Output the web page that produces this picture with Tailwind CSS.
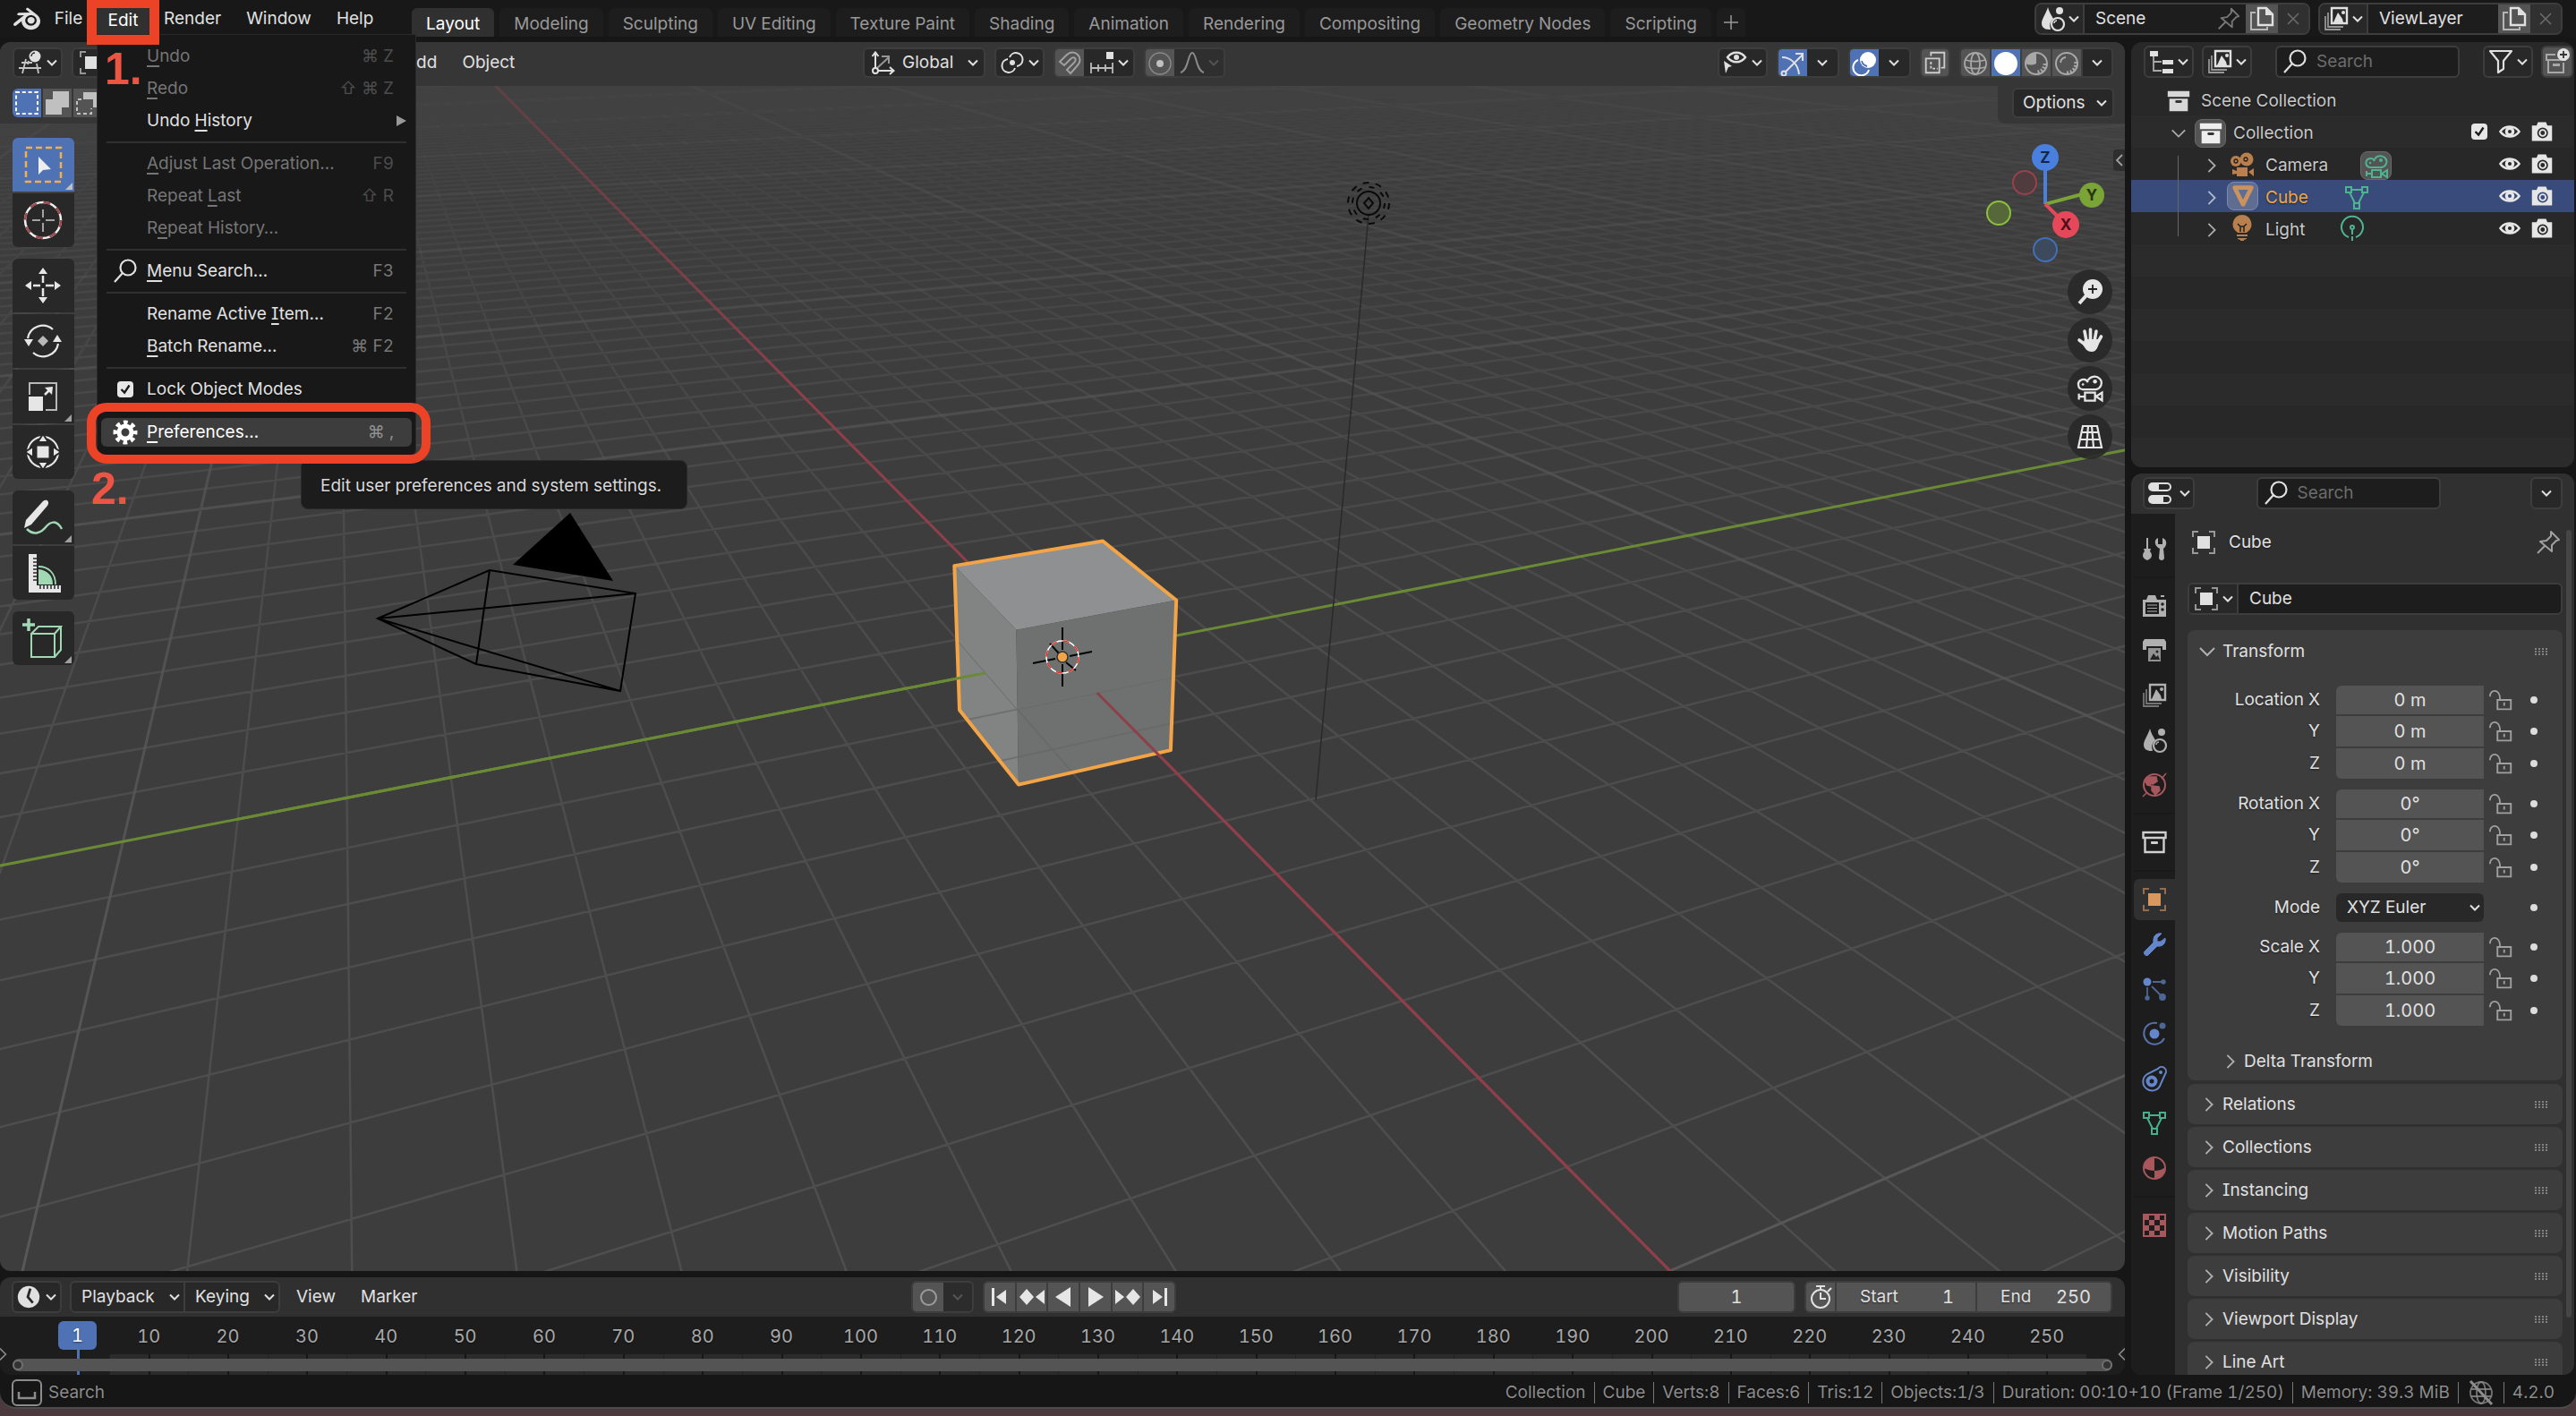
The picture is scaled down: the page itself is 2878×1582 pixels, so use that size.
<!DOCTYPE html>
<html lang="en">
<head>
<meta charset="utf-8">
<title>Blender</title>
<script src="https://cdn.jsdelivr.net/npm/@tailwindcss/browser@4"></script>
</head>
<body class="h-screen overflow-hidden bg-[#4a3a3e] font-['Inter',sans-serif] text-[19px] leading-6 text-[#e0e0e0] [font-feature-settings:'cv08','tnum'] text-shadow-[0_1px_2px_#00000080]">

<svg class="hidden" aria-hidden="true">
  <symbol id="logo" viewBox="0 0 24 24"><path fill="currentColor" d="M12.51 13.214c.046-.8.438-1.506 1.03-2.006a3.424 3.424 0 0 1 2.212-.79c.85 0 1.631.3 2.211.79.592.5.983 1.206 1.028 2.005.045.823-.285 1.586-.865 2.153a3.389 3.389 0 0 1-2.374.938 3.393 3.393 0 0 1-2.376-.938c-.58-.567-.91-1.33-.865-2.152M7.35 14.831c.006.314.106.922.256 1.398a7.372 7.372 0 0 0 1.593 2.757 8.227 8.227 0 0 0 2.787 2.001 8.947 8.947 0 0 0 3.66.76 8.964 8.964 0 0 0 3.657-.772 8.285 8.285 0 0 0 2.785-2.01 7.428 7.428 0 0 0 1.592-2.762 6.964 6.964 0 0 0 .25-3.074 7.123 7.123 0 0 0-1.016-2.779 7.764 7.764 0 0 0-1.852-2.043h.002L13.566 2.55l-.02-.015c-.492-.378-1.319-.376-1.86.002-.547.382-.609 1.015-.123 1.415l-.001.001 3.126 2.543-9.53.01h-.013c-.788.001-1.545.518-1.695 1.172-.154.665.38 1.217 1.2 1.22V8.9l4.83-.01-8.62 6.617-.034.025c-.813.622-1.075 1.658-.563 2.313.52.667 1.625.668 2.447.004L7.414 14s-.069.52-.063.831zm12.09 1.741c-.97.988-2.326 1.548-3.795 1.55-1.47.004-2.827-.552-3.797-1.538a4.51 4.51 0 0 1-1.036-1.622 4.282 4.282 0 0 1 .282-3.519 4.702 4.702 0 0 1 1.153-1.371c.942-.768 2.141-1.183 3.396-1.185 1.256-.002 2.455.41 3.398 1.175.48.391.87.854 1.152 1.367a4.28 4.28 0 0 1 .522 1.706 4.236 4.236 0 0 1-.239 1.811 4.54 4.54 0 0 1-1.035 1.626"/></symbol>
  <symbol id="down" viewBox="0 0 16 16"><path d="M3 5.5l5 5 5-5" fill="none" stroke="currentColor" stroke-width="2"/></symbol>
  <symbol id="chev-d" viewBox="0 0 20 20"><path d="M2 6l8 8 8-8" fill="none" stroke="currentColor" stroke-width="2"/></symbol>
  <symbol id="chev-r" viewBox="0 0 20 20"><path d="M6 2l8 8-8 8" fill="none" stroke="currentColor" stroke-width="2"/></symbol>
  <symbol id="search" viewBox="0 0 32 32"><g fill="none" stroke="currentColor" stroke-width="2.2"><circle cx="19" cy="12" r="8.5"/><path d="M13 18L4 28"/></g></symbol>
  <symbol id="gear" viewBox="0 0 32 32"><g fill="none" stroke="currentColor"><circle cx="16" cy="16" r="7" stroke-width="5"/><circle cx="16" cy="16" r="11" stroke-width="5" stroke-dasharray="4.6 4.04" stroke-dashoffset="2.3"/></g></symbol>
  <symbol id="close" viewBox="0 0 16 16"><path d="M2 2l12 12M14 2L2 14" stroke="currentColor" stroke-width="1.5"/></symbol>
  <symbol id="v3d" viewBox="0 0 32 32"><g fill="none" stroke="currentColor" stroke-width="1.8"><path d="M11 12L7 28M23 17l2 11M3 22h25M6 16h12M14 14l-1 4" opacity=".85"/></g><circle cx="21" cy="9" r="6.5" fill="currentColor"/><path d="M17 9a4 4 0 0 1 4-4" fill="none" stroke="#282828" stroke-width="1.500"/></symbol>
  <symbol id="object" viewBox="0 0 32 32"><rect x="9" y="9" width="14" height="14" fill="currentColor"/><path d="M4 10V4h6M22 4h6v6M28 22v6h-6M10 28H4v-6" fill="none" stroke="currentColor" stroke-width="2" opacity=".6"/></symbol>
  <symbol id="axes" viewBox="0 0 32 32"><g fill="none" stroke="currentColor" stroke-width="2"><circle cx="8" cy="25" r="3"/><path d="M8 22V5M4.500 9L8 4.500 11.500 9M11 25h17M24 21l4.500 4-4.500 4"/><path d="M10 22L23 10M15 9h8v8" opacity=".6"/></g></symbol>
  <symbol id="pivot" viewBox="0 0 32 32"><g fill="none" stroke="currentColor" stroke-width="2"><path d="M13 10a7.500 7.500 0 1 1 8 10"/><path d="M19 22A7.500 7.500 0 1 1 11 12"/></g><circle cx="16" cy="16" r="3" fill="currentColor"/></symbol>
  <symbol id="magnet" viewBox="0 0 32 32"><path d="M5 14l7-7c5-5 10-4 13-1s4 8-1 13l-7 8-4-4 8-8c2-2 2-4 1-5s-3-1-5 1l-7 7z" fill="none" stroke="currentColor" stroke-width="2"/></symbol>
  <symbol id="snapinc" viewBox="0 0 32 32"><path d="M4 16v12M12 18v8M20 18v8M28 16v12M4 22h24" stroke="currentColor" stroke-width="1.8" opacity=".8"/><rect x="21" y="4" width="8" height="8" fill="currentColor"/></symbol>
  <symbol id="prop" viewBox="0 0 32 32"><circle cx="16" cy="16" r="12" fill="none" stroke="currentColor" stroke-width="1.500" opacity=".5"/><circle cx="16" cy="16" r="4" fill="currentColor"/></symbol>
  <symbol id="falloff" viewBox="0 0 32 32"><path d="M3 27c9-2 8-22 13-22s4 20 13 22" fill="none" stroke="currentColor" stroke-width="2"/></symbol>
  <symbol id="viseye" viewBox="0 0 32 32"><path d="M3 14l9 6-4 1-3 7z" fill="currentColor"/><path d="M7 10c5-7 15-7 20 0-5 7-15 7-20 0z" fill="none" stroke="currentColor" stroke-width="2.400"/><circle cx="17" cy="10" r="3" fill="currentColor"/></symbol>
  <symbol id="gizmo" viewBox="0 0 32 32"><g fill="none" stroke="currentColor" stroke-width="2"><circle cx="6" cy="27" r="2.500"/><path d="M8 25L27 6M19 5h8v8M4 9c10 0 18 8 19 19"/></g></symbol>
  <symbol id="overlay" viewBox="0 0 32 32"><circle cx="20" cy="12" r="9" fill="currentColor"/><path d="M9 12a9 9 0 1 0 12 11" fill="none" stroke="currentColor" stroke-width="2"/><path d="M13 13a8 8 0 0 0 6 6" fill="none" stroke="#4f72b4" stroke-width="1.800"/></symbol>
  <symbol id="xray" viewBox="0 0 32 32"><g fill="none" stroke="currentColor" stroke-width="2"><path d="M5 11h16v17H5zM11 8V4h16v18h-4"/><path d="M11 15v8h8" stroke-dasharray="3 2"/></g></symbol>
  <symbol id="wire" viewBox="0 0 32 32"><g fill="none" stroke="currentColor" stroke-width="1.800"><circle cx="16" cy="16" r="12"/><ellipse cx="16" cy="16" rx="5" ry="12"/><path d="M5 12c7 2 15 2 22 0M5 20c7 2 15 2 22 0"/></g></symbol>
  <symbol id="solid" viewBox="0 0 32 32"><circle cx="16" cy="16" r="13" fill="currentColor"/></symbol>
  <symbol id="matprev" viewBox="0 0 32 32"><circle cx="16" cy="16" r="12" fill="none" stroke="currentColor" stroke-width="2"/><path d="M16 4v12c-4 2-8 2-12 0A12 12 0 0 1 16 4z" fill="currentColor"/><path d="M26 16a10 10 0 0 1-9 10" fill="none" stroke="currentColor" stroke-width="5" stroke-dasharray="2 2"/></symbol>
  <symbol id="rendered" viewBox="0 0 32 32"><g fill="none" stroke="currentColor" stroke-width="2"><circle cx="16" cy="16" r="12"/><path d="M9 15a7 7 0 0 1 6-6"/><path d="M26 14a10 10 0 0 1-12 12" stroke-width="4" stroke-dasharray="2 2"/></g></symbol>
  <symbol id="scene" viewBox="0 0 32 32"><path d="M11 3C9 10 4 16 4 21s4 7 8 7c1 0 2 0 2-1-2-4 0-9 3-11-2-4-5-8-6-13z" fill="currentColor"/><circle cx="24" cy="7" r="4" fill="currentColor"/><circle cx="22" cy="22" r="7" fill="none" stroke="currentColor" stroke-width="2.200"/><path d="M18 21c0-2 2-3 3-3" fill="none" stroke="currentColor" stroke-width="1.500"/></symbol>
  <symbol id="layers" viewBox="0 0 32 32"><path d="M11 4h17v17H11z" fill="none" stroke="currentColor" stroke-width="2.400"/><path d="M13 20l5-11 5 7 1 4z" fill="currentColor"/><circle cx="24" cy="9" r="2" fill="currentColor"/><path d="M7 9v16h17M4 13v15h17" fill="none" stroke="currentColor" stroke-width="1.800" opacity=".6"/></symbol>
  <symbol id="copy" viewBox="0 0 32 32"><path d="M12 4h9l7 7v12H12z" fill="none" stroke="currentColor" stroke-width="2.400"/><path d="M20 4v8h8" fill="currentColor"/><path d="M9 9H4v19h18v-3" fill="none" stroke="currentColor" stroke-width="2" opacity=".7"/></symbol>
  <symbol id="pin" viewBox="0 0 32 32"><path d="M4 28l8-8M19 4l9 9-3 1-5 5 0 7L7 15l7-1 5-5z" fill="none" stroke="currentColor" stroke-width="2" stroke-linejoin="round"/></symbol>
  <symbol id="outliner" viewBox="0 0 32 32"><path d="M3 4h9v6H3zM17 14h12v5H17zM17 24h12v5H17z" fill="currentColor"/><path d="M7 10v16h9M7 16h9" fill="none" stroke="currentColor" stroke-width="1.800" opacity=".7"/></symbol>
  <symbol id="filter" viewBox="0 0 32 32"><path d="M4 4h24l-9 11v9l-6 4V15z" fill="none" stroke="currentColor" stroke-width="2.200" stroke-linejoin="round"/></symbol>
  <symbol id="newcol" viewBox="0 0 32 32"><g fill="none" stroke="currentColor" stroke-width="2" opacity=".6"><path d="M14 8H4v6h22M6 15v13h17V17"/></g><path d="M11 18h8v3h-8z" fill="currentColor" opacity=".6"/><circle cx="23" cy="8" r="7" fill="currentColor"/><path d="M23 4v8M19 8h8" stroke="#333" stroke-width="1.800"/></symbol>
  <symbol id="box" viewBox="0 0 32 32"><path d="M3 4h26v7H3zM5 13h22v15H5z" fill="currentColor"/><rect x="12" y="15" width="8" height="3" rx="1.500" fill="#333"/></symbol>
  <symbol id="boxline" viewBox="0 0 32 32"><path d="M3.500 5h25v6h-25zM5.500 11v16h21V11" fill="none" stroke="currentColor" stroke-width="2.400"/><rect x="12" y="15" width="8" height="3" rx="1" fill="currentColor"/></symbol>
  <symbol id="moviecam" viewBox="0 0 32 32"><circle cx="9" cy="11" r="6" fill="currentColor"/><circle cx="21" cy="9" r="7.500" fill="currentColor"/><path d="M10 18h12v10H10zM23 23l6-4v9zM5 20l5 2v3l-5 1z" fill="currentColor"/><circle cx="9" cy="11" r="2" fill="none" stroke="#222" stroke-width="1.300"/><circle cx="20" cy="9" r="2" fill="none" stroke="#222" stroke-width="1.300"/></symbol>
  <symbol id="camline" viewBox="0 0 32 32"><g fill="none" stroke="currentColor" stroke-width="2"><path d="M14 8a7 6.500 0 1 1 8 9H9a5 5 0 1 1 5-7"/><path d="M11 20h10v8H11zM22 24l6-4v8zM11 24H6M5 21v6"/></g><circle cx="21" cy="9" r="2" fill="currentColor"/><circle cx="9" cy="12" r="1.200" fill="currentColor"/></symbol>
  <symbol id="meshobj" viewBox="0 0 32 32"><path d="M6 6h20L16 26z" fill="none" stroke="currentColor" stroke-width="5" stroke-linejoin="round"/></symbol>
  <symbol id="mesh" viewBox="0 0 32 32"><g fill="none" stroke="currentColor" stroke-width="2"><path d="M4 4h6v6H4zM22 4h6v6h-6zM13 22h6v6h-6zM10 7h12M8 10l6 12M24 10l-6 12"/></g></symbol>
  <symbol id="bulb" viewBox="0 0 32 32"><path d="M16 1a10.500 10.500 0 0 1 6 19l-1 1H11l-1-1a10.500 10.500 0 0 1 6-19zM10 23h12v2H10zM11 27h10v1l-3 1v1h-4v-1l-3-1z" fill="currentColor"/><path d="M11 11l3 3h4l3-3M14 14v6M18 14v6" fill="none" stroke="#222" stroke-width="1.500"/></symbol>
  <symbol id="lightdata" viewBox="0 0 32 32"><g fill="none" stroke="currentColor" stroke-width="2"><path d="M12 26A12 12 0 1 1 20 26"/><circle cx="16" cy="15" r="2"/><path d="M16 18v12" stroke-dasharray="5 2"/></g></symbol>
  <symbol id="eye" viewBox="0 0 32 32"><path d="M3 16c6-9 20-9 26 0-6 9-20 9-26 0z" fill="none" stroke="currentColor" stroke-width="3"/><circle cx="16" cy="16" r="4.500" fill="none" stroke="currentColor" stroke-width="4"/></symbol>
  <symbol id="photocam" viewBox="0 0 32 32"><path fill-rule="evenodd" d="M1 7h7l2-5h12l2 5h7v23H1zM17 10a8 8 0 1 0 0 16 8 8 0 0 0 0-16z" fill="currentColor"/><circle cx="17" cy="18" r="4.500" fill="none" stroke="currentColor" stroke-width="2.500"/></symbol>
  <symbol id="propsicon" viewBox="0 0 32 32"><rect x="3" y="4" width="26" height="10" rx="5" fill="currentColor"/><rect x="3" y="18" width="26" height="10" rx="5" fill="currentColor"/><path d="M15 6h9a3 3 0 0 1 0 6h-9zM20 20h4a3 3 0 0 1 0 6h-4z" fill="#282828"/></symbol>
  <symbol id="tools" viewBox="0 0 32 32"><path d="M7 4h2v12h3l-1 3c3 3 3 8-3 10-6-2-6-7-3-10l-1-3h3zM20 4v7h5V4c6 2 5 9 1 12l1 10c0 4-6 4-6 0l1-10c-6-3-7-10-2-12z" fill="currentColor"/></symbol>
  <symbol id="rendercam" viewBox="0 0 32 32"><path fill-rule="evenodd" d="M3 9h4l2-5h8l2 5h10v19H3zM6 12v13h15V12z" fill="currentColor"/><path d="M8 15h11M8 18.500h11M8 22h11" stroke="currentColor" stroke-width="1.200"/><path d="M23 4h4v2h-4z" fill="currentColor"/><circle cx="25" cy="14" r="1.800" fill="#222"/><circle cx="25" cy="20" r="1.800" fill="#222"/></symbol>
  <symbol id="printer" viewBox="0 0 32 32"><path d="M5 3h22l2 3v9H25v-4H7v4H3V6z" fill="currentColor"/><path d="M9 13h14v15H9z" fill="currentColor" opacity=".8"/><path d="M11 26l4-7 3 4 2-2 2 5z" fill="#222"/><circle cx="19" cy="17" r="1.500" fill="#222"/></symbol>
  <symbol id="world" viewBox="0 0 32 32"><circle cx="16" cy="16" r="12" fill="none" stroke="currentColor" stroke-width="2"/><path d="M9 7l9 0 1 5-5 3-3-2 1 4-4-1-3-5zM13 17l8 1 1 4-5 5-4-5zM24 9l5-6M3 29l5-5" fill="currentColor" stroke="currentColor" stroke-width="1.500"/></symbol>
  <symbol id="wrench" viewBox="0 0 32 32"><path d="M28 9c1 6-3 10-9 9L9 28c-3 2-6-2-4-4l10-10C14 7 18 3 24 4l-5 5 0 4h4z" fill="currentColor" stroke="currentColor" stroke-linejoin="round"/></symbol>
  <symbol id="particles" viewBox="0 0 32 32"><circle cx="8" cy="8" r="4.500" fill="currentColor"/><g opacity=".7" fill="currentColor" stroke="currentColor" stroke-width="1.800"><circle cx="26" cy="8" r="1.800"/><circle cx="8" cy="26" r="1.800"/><circle cx="25" cy="25" r="3"/><path d="M14 8h11M8 14v11M13 13l11 11"/></g></symbol>
  <symbol id="physics" viewBox="0 0 32 32"><circle cx="16" cy="16" r="5.500" fill="currentColor"/><circle cx="25" cy="7" r="3.500" fill="currentColor" opacity=".7"/><path d="M19 4a12 12 0 1 0 8 17" fill="none" stroke="currentColor" stroke-width="2" opacity=".8"/></symbol>
  <symbol id="constraint" viewBox="0 0 32 32"><g fill="none" stroke="currentColor" stroke-width="2"><path d="M20 5a5 5 0 0 1 8 6l-5 11A10 10 0 1 1 8 11z"/><circle cx="13" cy="19" r="4.500" stroke-width="4"/></g><circle cx="23" cy="9" r="2" fill="currentColor"/></symbol>
  <symbol id="material" viewBox="0 0 32 32"><circle cx="16" cy="16" r="12" fill="none" stroke="currentColor" stroke-width="2"/><path d="M16 4v15c-4 0-8-1-12-3A12 12 0 0 1 16 4zM16 19v9c7 0 12-6 12-13-4 3-8 4-12 4z" fill="currentColor"/></symbol>
  <symbol id="texture" viewBox="0 0 32 32"><path d="M4 4h24v24H4z" fill="none" stroke="currentColor" stroke-width="2"/><path d="M4 4h6v6H4zM16 4h6v6h-6zM10 10h6v6h-6zM22 10h6v6h-6zM4 16h6v6H4zM16 16h6v6h-6zM10 22h6v6h-6zM22 22h6v6h-6z" fill="currentColor"/></symbol>
  <symbol id="lock" viewBox="0 0 32 32"><g fill="none" stroke="currentColor" stroke-width="2"><path d="M12 16h16v11H12zM3 12c0-9 12-10 12 3"/><path d="M20 19v4"/></g></symbol>
  <symbol id="dots" viewBox="0 0 16 8"><path d="M1 1h14M1 4h14M1 7h14" stroke="currentColor" stroke-width="1.500" stroke-dasharray="2 2"/></symbol>
  <symbol id="clock" viewBox="0 0 32 32"><circle cx="16" cy="16" r="13" fill="currentColor"/><path d="M18 6l-3 10 6 7" fill="none" stroke="#282828" stroke-width="3"/></symbol>
  <symbol id="stopwatch" viewBox="0 0 32 32"><g fill="none" stroke="currentColor" stroke-width="2"><circle cx="16" cy="18" r="10"/><path d="M16 11v7h6M11 4h10M16 4v4M24 10l4-4"/></g></symbol>
  <symbol id="globe" viewBox="0 0 32 32"><g fill="none" stroke="currentColor" stroke-width="1.800"><circle cx="16" cy="16" r="12" opacity=".8"/><ellipse cx="16" cy="16" rx="5" ry="12" opacity=".8"/><path d="M5 12h22M5 20h22" opacity=".8"/><path d="M4 3l24 26" stroke-width="3"/></g></symbol>
  <symbol id="check" viewBox="0 0 20 20"><path d="M5 10l4 4 6-9" fill="none" stroke="#181818" stroke-width="2.600"/></symbol>
</svg>

<div class="flex h-full flex-col">
<div class="flex min-h-0 flex-1 flex-col overflow-hidden rounded-b-[18px] border-b-2 border-[#4c4c4c] bg-[#161616]">

  <!-- Top bar -->
  <header class="relative flex h-[41px] shrink-0 items-end bg-[#181818] pr-[15px]">
    <nav class="flex h-[41px] w-[460px] shrink-0 items-center pl-[15px]">
      <button class="mr-[15px]" aria-label="Blender"><svg class="size-[30px]"><use href="#logo"/></svg></button>
      <button class="mr-[15px] w-[33px]">File</button>
      <button class="mt-1 h-[33px] w-[59px] rounded-t bg-[#303030] text-white">Edit</button>
      <button class="ml-4">Render</button>
      <button class="ml-7">Window</button>
      <button class="ml-7">Help</button>
    </nav>
    <nav class="flex gap-[6px] text-[#989898]">
      <button class="h-8 rounded-t-md bg-[#303030] px-4 pt-1 text-white">Layout</button>
      <button class="h-8 rounded-t-md bg-[#1d1d1d] px-4 pt-1">Modeling</button>
      <button class="h-8 rounded-t-md bg-[#1d1d1d] px-4 pt-1">Sculpting</button>
      <button class="h-8 rounded-t-md bg-[#1d1d1d] px-4 pt-1">UV Editing</button>
      <button class="h-8 rounded-t-md bg-[#1d1d1d] px-4 pt-1">Texture Paint</button>
      <button class="h-8 rounded-t-md bg-[#1d1d1d] px-4 pt-1">Shading</button>
      <button class="h-8 rounded-t-md bg-[#1d1d1d] px-4 pt-1">Animation</button>
      <button class="h-8 rounded-t-md bg-[#1d1d1d] px-4 pt-1">Rendering</button>
      <button class="h-8 rounded-t-md bg-[#1d1d1d] px-4 pt-1">Compositing</button>
      <button class="h-8 rounded-t-md bg-[#1d1d1d] px-4 pt-1">Geometry Nodes</button>
      <button class="h-8 rounded-t-md bg-[#1d1d1d] px-4 pt-1">Scripting</button>
      <button class="grid h-8 w-8 place-items-center rounded-t-md bg-[#1d1d1d]" aria-label="Add workspace"><svg class="size-4" viewBox="0 0 16 16"><path d="M8 0v16M0 8h16" stroke="currentColor" stroke-width="1.500"/></svg></button>
    </nav>
    <div class="mb-[2px] ml-auto flex gap-[9px]">
      <div class="flex h-9 w-[308px] overflow-hidden rounded-lg border-2 border-[#3d3d3d] bg-[#1d1d1d]">
        <button class="flex w-[54px] items-center justify-center border-r-2 border-[#3d3d3d] bg-[#282828]" aria-label="Browse scene"><svg class="size-8"><use href="#scene"/></svg><svg class="size-4"><use href="#down"/></svg></button>
        <input class="w-0 flex-1 pl-3" value="Scene" aria-label="Scene name">
        <button class="text-[#777777]" aria-label="Pin scene"><svg class="mr-1 size-[30px]"><use href="#pin"/></svg></button>
        <button class="grid w-9 place-items-center bg-[#545454]" aria-label="New scene"><svg class="size-8"><use href="#copy"/></svg></button>
        <button class="grid w-[34px] place-items-center bg-[#303030] text-[#6c6c6c]" aria-label="Delete scene"><svg class="size-4"><use href="#close"/></svg></button>
      </div>
      <div class="flex h-9 w-[273px] overflow-hidden rounded-lg border-2 border-[#3d3d3d] bg-[#1d1d1d]">
        <button class="flex w-[54px] items-center justify-center border-r-2 border-[#3d3d3d] bg-[#282828]" aria-label="Browse view layer"><svg class="size-8"><use href="#layers"/></svg><svg class="size-4"><use href="#down"/></svg></button>
        <input class="w-0 flex-1 pl-3" value="ViewLayer" aria-label="View layer name">
        <button class="grid w-9 place-items-center bg-[#545454]" aria-label="New view layer"><svg class="size-8"><use href="#copy"/></svg></button>
        <button class="grid w-[34px] place-items-center bg-[#303030] text-[#6c6c6c]" aria-label="Delete view layer"><svg class="size-4"><use href="#close"/></svg></button>
      </div>
    </div>
  </header>

  <main class="flex min-h-0 flex-1 gap-[7px] pt-[6px] pr-[2px]">
    <div class="flex min-w-0 flex-1 flex-col gap-[7px]">

      <!-- 3D viewport -->
      <section class="relative flex min-h-0 flex-1 flex-col overflow-hidden rounded-xl bg-[#3d3d3d]">
        <svg class="absolute inset-0 size-full" viewBox="0 0 2374 1373" preserveAspectRatio="xMidYMid slice" fill="none">
          <defs>
            <linearGradient id="fine" gradientUnits="userSpaceOnUse" x1="0" y1="0" x2="0" y2="1373"><stop offset="0" stop-color="#545454" stop-opacity=".12"/><stop offset=".12" stop-color="#545454" stop-opacity=".25"/><stop offset=".3" stop-color="#545454" stop-opacity=".5"/><stop offset=".5" stop-color="#545454" stop-opacity=".65"/><stop offset="1" stop-color="#545454" stop-opacity=".75"/></linearGradient>
            <linearGradient id="coarse" gradientUnits="userSpaceOnUse" x1="0" y1="0" x2="0" y2="1373"><stop offset="0" stop-color="#545454" stop-opacity=".1"/><stop offset=".12" stop-color="#545454" stop-opacity=".4"/><stop offset=".35" stop-color="#545454" stop-opacity=".8"/><stop offset="1" stop-color="#585858"/></linearGradient>
            <linearGradient id="redfade" gradientUnits="userSpaceOnUse" x1="0" y1="0" x2="0" y2="400"><stop offset="0" stop-color="#8f3f4a" stop-opacity=".3"/><stop offset="1" stop-color="#8f3f4a"/></linearGradient>
            <clipPath id="below"><path id="belowpath"/></clipPath>
          </defs>
          <path id="grid1" stroke="url(#fine)" stroke-width="2.500"/>
          <path id="grid10" stroke="url(#coarse)" stroke-width="3"/>
          <path id="xaxis" stroke="url(#redfade)" stroke-width="3"/>
          <path id="yaxis" stroke="#6b8a35" stroke-width="3"/>
          <path id="top" fill="#8e9092"/><path id="left" fill="#828483"/><path id="front" fill="#6f7170"/>
          <path id="gridcube" clip-path="url(#below)" stroke="#666766" stroke-width="2" opacity=".7"/>
          <path id="outline" stroke="#f3a446" stroke-width="4" stroke-linejoin="round"/>
          <path id="xnear" stroke="#8f3f4a" stroke-width="3"/>
          <path id="ynear" stroke="#6b8a35" stroke-width="3"/>
          <!-- 3D cursor and origin -->
          <g stroke="#000" stroke-width="2"><path d="M1187 654v25M1187 695v25M1154 694l25-5M1195 686l25-5M1173 672l10 11M1191 693l11 9"/></g>
          <circle cx="1187" cy="687" r="18" stroke="#fff" stroke-width="1.500"/><circle cx="1187" cy="687" r="18" stroke="#e8322a" stroke-width="1.500" stroke-dasharray="7.070 7.070"/>
          <circle cx="1187" cy="687" r="6" fill="#f3a446" stroke="#333" stroke-width="1.500"/>
          <!-- Camera object -->
          <path d="M422 644L547 590L710 616L693 725L532 695zM547 590L532 695M422 644L710 616M422 644L693 725" stroke="#000" stroke-width="2"/>
          <path d="M637 526L573 584L685 602z" fill="#000"/>
          <!-- Light object -->
          <path d="M1529 193L1470 847" stroke="#2a2a2a" stroke-width="1.500"/>
          <g stroke="#0a0a0a" stroke-width="2"><circle cx="1529" cy="180" r="23" stroke-dasharray="7 7.450"/><circle cx="1529" cy="180" r="18" stroke-dasharray="6 8.130"/><circle cx="1529" cy="180" r="13"/><path d="M1529 174l5 6-5 6-5-6z"/></g>
          <!-- Navigation gizmo -->
          <g stroke-width="4"><path d="M2285 181V144" stroke="#4a80dd"/><path d="M2285 181l45-12" stroke="#7aa437"/><path d="M2285 181l18 18" stroke="#e54858"/></g>
          <g stroke-width="2"><circle cx="2262" cy="157" r="13" fill="#503c3f" stroke="#95424c"/><circle cx="2233" cy="191" r="13" fill="#56683a" stroke="#8ac03a"/><circle cx="2285" cy="232" r="13" fill="#3d4a5e" stroke="#4370b4"/></g>
          <circle cx="2285" cy="129" r="15" fill="#4a80dd"/><circle cx="2337" cy="171" r="14" fill="#7aa437"/><circle cx="2308" cy="204" r="15" fill="#e54858"/>
          <g class="text-[17px] font-bold text-shadow-none" text-anchor="middle"><text x="2285" y="135" fill="#122647">Z</text><text x="2337" y="177" fill="#243610">Y</text><text x="2308" y="210" fill="#4e1018">X</text></g>
        </svg>

        <div class="relative flex h-[49px] shrink-0 items-center bg-[#363636]/95 pr-[13px] pb-1 pl-[14px]">
          <button class="flex h-[34px] w-14 items-center justify-center rounded-md border-2 border-[#3d3d3d] bg-[#282828]" aria-label="Editor type"><svg class="size-8"><use href="#v3d"/></svg><svg class="size-4"><use href="#down"/></svg></button>
          <button class="mr-auto ml-[10px] flex h-[34px] w-[190px] items-center rounded-md border-2 border-[#3d3d3d] bg-[#282828] pl-1" aria-label="Object mode"><svg class="size-8"><use href="#object"/></svg></button>
          <div class="absolute left-[452px] flex gap-7"><button>Add</button><button>Object</button></div>
          <div class="absolute left-[964px] flex gap-[10px]">
            <button class="flex h-[34px] w-[137px] items-center rounded-md border-2 border-[#3d3d3d] bg-[#282828] pl-1"><svg class="size-8"><use href="#axes"/></svg><span class="ml-[6px] flex-1 text-left">Global</span><svg class="mr-1 size-4"><use href="#down"/></svg></button>
            <button class="flex h-[34px] w-14 items-center justify-center rounded-md border-2 border-[#3d3d3d] bg-[#282828]" aria-label="Pivot point"><svg class="size-8"><use href="#pivot"/></svg><svg class="size-4"><use href="#down"/></svg></button>
            <div class="flex h-[34px] w-[91px] overflow-hidden rounded-md border-2 border-[#3d3d3d] bg-[#282828]"><button class="grid w-8 place-items-center bg-[#545454] text-[#a0a0a0]" aria-label="Snap"><svg class="size-8"><use href="#magnet"/></svg></button><button class="flex flex-1 items-center justify-center" aria-label="Snapping"><svg class="size-8"><use href="#snapinc"/></svg><svg class="size-4"><use href="#down"/></svg></button></div>
            <div class="flex h-[34px] w-[91px] overflow-hidden rounded-md border-2 border-[#3d3d3d] bg-[#2f2f2f]"><button class="grid w-8 place-items-center bg-[#545454] text-[#c0c0c0]" aria-label="Proportional editing"><svg class="size-8"><use href="#prop"/></svg></button><button class="flex flex-1 items-center justify-center text-[#8a8a8a]" aria-label="Falloff"><svg class="size-8"><use href="#falloff"/></svg><svg class="size-4 opacity-40"><use href="#down"/></svg></button></div>
          </div>
          <div class="flex items-center gap-[10px]">
            <button class="flex h-[34px] w-14 items-center justify-center rounded-md border-2 border-[#3d3d3d] bg-[#282828]" aria-label="Object types"><svg class="size-8"><use href="#viseye"/></svg><svg class="size-4"><use href="#down"/></svg></button>
            <div class="flex h-[34px] w-[70px] overflow-hidden rounded-md border-2 border-[#3d3d3d] bg-[#282828]"><button class="grid w-8 place-items-center bg-[#4f72b4]" aria-label="Gizmos"><svg class="size-8"><use href="#gizmo"/></svg></button><button class="grid flex-1 place-items-center" aria-label="Gizmo options"><svg class="size-4"><use href="#down"/></svg></button></div>
            <div class="flex h-[34px] w-[70px] overflow-hidden rounded-md border-2 border-[#3d3d3d] bg-[#282828]"><button class="grid w-8 place-items-center bg-[#4f72b4] text-white" aria-label="Overlays"><svg class="size-8"><use href="#overlay"/></svg></button><button class="grid flex-1 place-items-center" aria-label="Overlay options"><svg class="size-4"><use href="#down"/></svg></button></div>
            <button class="grid h-[34px] w-[34px] place-items-center rounded-md border-2 border-[#3d3d3d] bg-[#545454] text-[#cccccc]" aria-label="X-ray"><svg class="size-[30px]"><use href="#xray"/></svg></button>
            <div class="flex h-[34px] w-[172px] gap-[2px] overflow-hidden rounded-md border-2 border-[#3d3d3d] bg-[#3d3d3d] text-[#a8a8a8]">
              <button class="grid w-8 place-items-center bg-[#545454]" aria-label="Wireframe"><svg class="size-8"><use href="#wire"/></svg></button><button class="grid w-8 place-items-center bg-[#4f72b4] text-white" aria-label="Solid"><svg class="size-8"><use href="#solid"/></svg></button><button class="grid w-8 place-items-center bg-[#545454]" aria-label="Material preview"><svg class="size-8"><use href="#matprev"/></svg></button><button class="grid w-8 place-items-center bg-[#545454]" aria-label="Rendered"><svg class="size-8"><use href="#rendered"/></svg></button><button class="grid flex-1 place-items-center bg-[#282828] text-[#e0e0e0]" aria-label="Shading options"><svg class="size-4"><use href="#down"/></svg></button>
            </div>
          </div>
        </div>

        <div class="relative flex h-[42px] shrink-0 justify-between">
          <div class="flex w-[380px] bg-[#363636]/95 pt-[3px] pl-[14px]">
            <div class="flex h-8 gap-[2px] overflow-hidden rounded-md">
              <button class="grid w-8 place-items-center bg-[#4f72b4]" aria-label="Set selection"><svg class="size-[26px]" viewBox="0 0 26 26"><rect x="1" y="1" width="24" height="24" fill="none" stroke="#fff" stroke-width="2" stroke-dasharray="4 2.800"/></svg></button>
              <button class="grid w-8 place-items-center bg-[#545454]" aria-label="Extend selection"><svg class="size-[26px]" viewBox="0 0 26 26"><path d="M8 0h18v18h-8v8H0V9h8z" fill="#c0c0c0"/></svg></button>
              <button class="grid w-8 place-items-center bg-[#545454]" aria-label="Subtract selection"><svg class="size-[26px]" viewBox="0 0 26 26"><path d="M8 1h17v17h-6V9H8z" fill="#c0c0c0"/><path d="M6 9H1v16h16v-6" fill="none" stroke="#c0c0c0" stroke-width="2" stroke-dasharray="4 3"/></svg></button>
            </div>
          </div>
          <div class="w-[142px] rounded-bl-lg bg-[#363636]/95 pt-[2px] pl-4">
            <button class="flex h-[34px] w-[114px] items-center justify-between rounded-md border-2 border-[#3d3d3d] bg-[#282828] pr-1 pl-[10px]">Options<svg class="size-4"><use href="#down"/></svg></button>
          </div>
        </div>

        <div class="relative flex justify-between">
          <!-- Toolbar -->
          <div class="mt-4 ml-[14px] flex w-[69px] flex-col gap-[13px]">
            <div class="flex flex-col gap-[2px] overflow-hidden rounded-md">
              <button class="grid h-[60px] place-items-center bg-[#4f72b4]" aria-label="Select box"><svg class="h-[60px] w-[69px]" viewBox="-5 0 69 60"><rect x="10" y="11" width="39" height="38" fill="none" stroke="#f0b04a" stroke-width="2.500" stroke-dasharray="7 4"/><path d="M24 21v20l5-5 9-1z" fill="#eee"/><path d="M62 50v8h-8z" fill="#c0c0c0"/></svg></button>
              <button class="grid h-[60px] place-items-center bg-[#282828]" aria-label="Cursor"><svg class="size-[60px]" viewBox="0 0 60 60"><g fill="none" stroke-width="2.500"><circle cx="29" cy="30" r="20" stroke="#eee"/><circle cx="29" cy="30" r="20" stroke="#9a4a4f" stroke-dasharray="7.850 7.850"/><path d="M29 18v9M29 33v10M17 30h9M32 30h10" stroke="#ccc" stroke-width="1.500"/></g></svg></button>
            </div>
            <div class="flex flex-col gap-[2px] overflow-hidden rounded-md text-[#e6e6e6]">
              <button class="grid h-[60px] place-items-center bg-[#282828]" aria-label="Move"><svg class="size-[60px]" viewBox="1 0 60 60"><path d="M30 10l5 7H25zM30 50l5-7H25zM10 30l7-5v10zM50 30l-7-5v10z" fill="currentColor"/><path d="M30 19v8M30 33v9M19 30h8M33 30h9" stroke="currentColor" stroke-width="2.500"/></svg></button>
              <button class="grid h-[60px] place-items-center bg-[#282828]" aria-label="Rotate"><svg class="size-[60px]" viewBox="1 0 60 60"><g fill="none" stroke="currentColor" stroke-width="2.200"><path d="M13 27a17 17 0 0 1 28-10M47 33a17 17 0 0 1-28 10"/></g><path d="M9 28h10l-5 8zM51 31H41l5-8z" fill="currentColor"/><path d="M30 24l6 6-6 6-6-6z" fill="#b8b8b8"/></svg></button>
              <button class="grid h-[60px] place-items-center bg-[#282828]" aria-label="Scale"><svg class="h-[60px] w-[69px]" viewBox="-4 0 69 60"><path d="M15 28V15h30v30H33" fill="none" stroke="#b8b8b8" stroke-width="2"/><path d="M14 30h16v16H14z" fill="currentColor"/><path d="M32 28l5-5" stroke="currentColor" stroke-width="2.500"/><path d="M41 19l-1 9-8-8z" fill="currentColor"/><path d="M62 50v8h-8z" fill="#a0a0a0"/></svg></button>
              <button class="grid h-[60px] place-items-center bg-[#282828]" aria-label="Transform"><svg class="size-[60px]" viewBox="1 0 60 60"><circle cx="30" cy="30" r="17" fill="none" stroke="currentColor" stroke-width="2"/><path d="M23 23h14v14H23z" fill="currentColor" stroke="#282828" stroke-width="1"/><path d="M30 10l6 9H24zM30 50l6-9H24zM10 30l9-6v12zM50 30l-9-6v12z" fill="currentColor" stroke="#282828" stroke-width="2"/></svg></button>
            </div>
            <div class="flex flex-col gap-[2px] overflow-hidden rounded-md text-[#a0d8b4]">
              <button class="grid h-[60px] place-items-center bg-[#282828]" aria-label="Annotate"><svg class="h-[60px] w-[69px]" viewBox="-4 0 69 60"><path d="M9 42l2-9 19-21c4-3 8 0 5 5L17 38z" fill="#e6e6e6"/><path d="M12 43c8 8 16 4 21-2s12-9 18 2" fill="none" stroke="currentColor" stroke-width="2.500"/><path d="M62 50v8h-8z" fill="#a0a0a0"/></svg></button>
              <button class="grid h-[60px] place-items-center bg-[#282828]" aria-label="Measure"><svg class="size-[60px]" viewBox="0 0 60 60"><path d="M13 9h9v35h27v8H13z" fill="#e6e6e6"/><path d="M18 14h4M18 18h4M18 22h4M18 26h4M18 30h4M18 34h4M18 38h4M26 44v4M30 44v4M34 44v4M38 44v4M42 44v4M46 44v4" stroke="#282828" stroke-width="1.500"/><path d="M24 43V26c10 1 16 7 16 17z" fill="currentColor"/><path d="M24 23c12 0 19 8 19 20" fill="none" stroke="currentColor" stroke-width="1.800"/></svg></button>
            </div>
            <button class="grid h-[60px] place-items-center rounded-md bg-[#282828] text-[#a0d8b4]" aria-label="Add cube"><svg class="h-[60px] w-[69px]" viewBox="-4 0 69 60"><g fill="none" stroke="currentColor" stroke-width="2"><path d="M17 25h26v26H17zM17 25l8-8h25l-7 8M50 17v26l-7 8"/></g><path d="M14 8v14M7 15h14" stroke="currentColor" stroke-width="3.500"/><path d="M62 50v8h-8z" fill="#a0a0a0"/></svg></button>
          </div>
          <!-- Navigation buttons -->
          <div class="relative mt-[163px] mr-[14px] flex flex-col gap-1 text-[#e6e6e6]">
            <button class="absolute -top-[134px] -right-[14px] grid h-6 w-[13px] place-items-center rounded-l bg-[#2e2e2e] text-[#a0a0a0]" aria-label="Show sidebar"><svg class="h-[14px] w-2" viewBox="0 0 8 14"><path d="M7 1L1 7l6 6" fill="none" stroke="currentColor" stroke-width="1.800"/></svg></button>
            <button class="grid size-[50px] place-items-center rounded-full bg-[#282828]/90" aria-label="Zoom"><svg class="size-8" viewBox="0 0 32 32"><circle cx="19" cy="13" r="11" fill="currentColor"/><path d="M12 20l-8 9" stroke="currentColor" stroke-width="4"/><path d="M19 8v10M14 13h10" stroke="#222" stroke-width="1.800"/></svg></button>
            <button class="grid size-[50px] place-items-center rounded-full bg-[#282828]/90" aria-label="Pan"><svg class="size-8" viewBox="0 0 32 32"><g stroke="currentColor" stroke-width="3.600" stroke-linecap="round" fill="none"><path d="M12 17L10 6M16.500 16V4M21 17l2-11M24.500 19l4-7M12 22l-8-6"/></g><path d="M10 15h15l1 5c-2 6-4 9-8 9-5 0-7-3-10-8z" fill="currentColor"/></svg></button>
            <button class="grid size-[50px] place-items-center rounded-full bg-[#282828]/90" aria-label="Camera view"><svg class="size-9"><use href="#camline"/></svg></button>
            <button class="grid size-[50px] place-items-center rounded-full bg-[#282828]/90" aria-label="Perspective"><svg class="size-8" viewBox="0 0 32 32"><path d="M8 4h16l5 24H3zM14 4l-2 24M18 4l2 24M7 11h18M5 19h22" fill="none" stroke="currentColor" stroke-width="2.200"/></svg></button>
          </div>
        </div>
      </section>

      <!-- Timeline -->
      <section class="relative shrink-0 overflow-hidden rounded-xl bg-[#1d1d1d]">
        <div class="relative flex h-11 items-center bg-[#303030] pr-[14px] pl-[13px]">
          <button class="flex h-9 w-14 items-center justify-center gap-[2px] rounded-md border-2 border-[#3d3d3d] bg-[#282828]" aria-label="Editor type"><svg class="size-[30px]"><use href="#clock"/></svg><svg class="size-4"><use href="#down"/></svg></button>
          <div class="ml-[9px] flex h-9 w-[235px] rounded-md border-2 border-[#3d3d3d] bg-[#282828]">
            <button class="flex w-[127px] items-center justify-between border-r-2 border-[#3d3d3d] pr-[2px] pl-[11px]">Playback<svg class="size-4"><use href="#down"/></svg></button>
            <button class="flex flex-1 items-center justify-between pr-[2px] pl-[11px]">Keying<svg class="size-4"><use href="#down"/></svg></button>
          </div>
          <button class="ml-[18px]">View</button>
          <button class="ml-7">Marker</button>
          <div class="absolute left-[1018px] flex gap-[10px]">
            <div class="flex h-9 w-[70px] overflow-hidden rounded-md border-2 border-[#3d3d3d] bg-[#2c2c2c]"><button class="grid w-[34px] place-items-center bg-[#545454]" aria-label="Auto keying"><span class="size-[19px] rounded-full border-2 border-[#9a9a9a]"></span></button><button class="grid flex-1 place-items-center text-[#555555]" aria-label="Keying options"><svg class="size-4"><use href="#down"/></svg></button></div>
            <div class="flex h-9 w-[216px] gap-[2px] overflow-hidden rounded-md border-2 border-[#3d3d3d] bg-[#3d3d3d] text-[#e6e6e6]">
              <button class="grid flex-1 place-items-center bg-[#545454]" aria-label="Jump to start"><svg class="size-6" viewBox="0 0 24 24"><path d="M3 2h3v20H3zM19 4v16L8 12z" fill="currentColor"/></svg></button>
              <button class="grid flex-1 place-items-center bg-[#545454]" aria-label="Previous keyframe"><svg class="h-6 w-8" viewBox="0 0 32 24"><path d="M10 3l8 9-8 9-8-9zM30 4v16l-10-8z" fill="currentColor"/></svg></button>
              <button class="grid flex-1 place-items-center bg-[#545454]" aria-label="Play backwards"><svg class="size-6" viewBox="0 0 24 24"><path d="M20 1v22L3 12z" fill="currentColor"/></svg></button>
              <button class="grid flex-1 place-items-center bg-[#545454]" aria-label="Play"><svg class="size-6" viewBox="0 0 24 24"><path d="M4 1v22l17-11z" fill="currentColor"/></svg></button>
              <button class="grid flex-1 place-items-center bg-[#545454]" aria-label="Next keyframe"><svg class="h-6 w-8" viewBox="0 0 32 24"><path d="M22 3l8 9-8 9-8-9zM2 4v16l10-8z" fill="currentColor"/></svg></button>
              <button class="grid flex-1 place-items-center bg-[#545454]" aria-label="Jump to end"><svg class="size-6" viewBox="0 0 24 24"><path d="M18 2h3v20h-3zM5 4v16l11-8z" fill="currentColor"/></svg></button>
            </div>
          </div>
          <div class="ml-auto flex gap-[10px]">
            <input class="h-9 w-[132px] rounded-md border-2 border-[#3d3d3d] bg-[#545454] text-center text-[20px]" value="1" aria-label="Current frame">
            <div class="flex h-9 w-[344px] gap-[2px] overflow-hidden rounded-md border-2 border-[#3d3d3d] bg-[#3d3d3d]">
              <button class="grid w-8 place-items-center bg-[#545454]" aria-label="Use preview range"><svg class="size-8"><use href="#stopwatch"/></svg></button>
              <label class="flex w-[155px] items-center justify-between bg-[#545454] pr-6 pl-[26px]">Start<input class="w-10 text-right text-[20px]" value="1"></label>
              <label class="flex flex-1 items-center justify-between bg-[#545454] pr-[22px] pl-[26px]">End<input class="w-12 text-right text-[20px]" value="250"></label>
            </div>
          </div>
        </div>
        <div class="relative h-[65px]">
          <div id="ruler" class="grid h-full grid-cols-25 pr-[43px] pl-[122px] text-[20px] text-[#a8a8a8]"></div>
          <div class="absolute top-[5px] left-[86px] h-[60px] w-[3px] bg-[#4f72b4]"></div>
          <div class="absolute top-[5px] left-[65px] grid h-8 w-[43px] place-items-center rounded-md bg-[#4f72b4] text-[20px] text-white">1</div>
          <div class="absolute inset-x-[14px] bottom-1 flex h-[14px] items-center justify-between rounded-full bg-[#545454]"><span class="size-3 rounded-full border-2 border-[#707070] bg-[#333333]"></span><span class="size-3 rounded-full border-2 border-[#707070] bg-[#333333]"></span></div>
          <svg class="absolute top-8 left-0 h-5 w-2 text-[#8a8a8a]" viewBox="6 0 10 20"><path d="M6 2l8 8-8 8" fill="none" stroke="currentColor" stroke-width="2"/></svg>
          <svg class="absolute top-8 right-0 h-5 w-2 text-[#8a8a8a]" viewBox="4 0 10 20"><path d="M14 2l-8 8 8 8" fill="none" stroke="currentColor" stroke-width="2"/></svg>
        </div>
      </section>
    </div>

    <aside class="flex w-[495px] shrink-0 flex-col gap-[7px]">
      <!-- Outliner -->
      <section class="flex h-[475px] shrink-0 flex-col overflow-hidden rounded-xl bg-[#282828]">
        <div class="flex h-[46px] shrink-0 items-center pb-[2px] pl-[14px]">
          <button class="flex h-9 w-14 items-center justify-center rounded-md border-2 border-[#3d3d3d] bg-[#282828]" aria-label="Editor type"><svg class="size-8"><use href="#outliner"/></svg><svg class="size-4"><use href="#down"/></svg></button>
          <button class="ml-[9px] flex h-9 w-14 items-center justify-center rounded-md border-2 border-[#3d3d3d] bg-[#282828]" aria-label="Display mode"><svg class="size-8"><use href="#layers"/></svg><svg class="size-4"><use href="#down"/></svg></button>
          <label class="ml-[26px] flex h-9 w-[206px] items-center rounded-md border-2 border-[#3d3d3d] bg-[#1d1d1d] pl-1"><svg class="mr-2 size-8 shrink-0"><use href="#search"/></svg><input class="w-full placeholder:text-[#6c6c6c]" placeholder="Search" aria-label="Search outliner"></label>
          <button class="ml-[26px] flex h-9 w-14 items-center justify-center rounded-md border-2 border-[#3d3d3d] bg-[#282828]" aria-label="Filter"><svg class="size-8"><use href="#filter"/></svg><svg class="size-4"><use href="#down"/></svg></button>
          <button class="ml-[9px] grid h-9 w-9 place-items-center rounded-md border-2 border-[#3d3d3d] bg-[#545454]" aria-label="New collection"><svg class="size-8"><use href="#newcol"/></svg></button>
        </div>
        <ul class="relative flex-1 text-[#c8c8c8]">
          <li class="flex h-9 items-center pt-1 pl-[38px]"><svg class="mr-[10px] size-[30px] text-[#d8d8d8]"><use href="#box"/></svg>Scene Collection</li>
          <li class="flex h-9 items-center bg-[#2b2b2b] pt-1 pr-[22px] pl-[44px]"><svg class="mr-[9px] size-[18px] text-[#aaaaaa]"><use href="#chev-d"/></svg><span class="mr-2 grid h-8 w-[35px] place-items-center rounded-lg border border-[#6a6a6a] bg-[#545454] text-[#eeeeee]"><svg class="size-[30px]"><use href="#box"/></svg></span>Collection
            <span class="relative mr-[12px] mb-1 ml-auto grid"><input type="checkbox" checked class="size-[18px] appearance-none rounded-sm bg-[#e6e6e6]" aria-label="Exclude from view layer"><svg class="pointer-events-none absolute inset-0 size-[18px]"><use href="#check"/></svg></span>
            <svg class="mr-[11px] mb-1 size-[26px] text-[#e6e6e6]"><use href="#eye"/></svg><svg class="mr-[2px] mb-1 size-6 text-[#e6e6e6]"><use href="#photocam"/></svg></li>
          <li class="flex h-9 items-center pt-1 pr-[22px] pl-[81px]"><svg class="mr-[9px] size-[18px] text-[#aaaaaa]"><use href="#chev-r"/></svg><svg class="mr-[10px] size-[32px] text-[#b97f4c]"><use href="#moviecam"/></svg>Camera
            <span class="ml-[36px] grid h-8 w-[35px] place-items-center rounded-lg border border-[#6a6a6a] bg-[#545454] text-[#4db391]"><svg class="size-8"><use href="#camline"/></svg></span>
            <svg class="mr-[11px] mb-1 ml-auto size-[26px] text-[#e6e6e6]"><use href="#eye"/></svg><svg class="mr-[2px] mb-1 size-6 text-[#e6e6e6]"><use href="#photocam"/></svg></li>
          <li class="flex h-9 items-center bg-[#394b7b] pt-1 pr-[22px] pl-[81px] text-[#efa648]"><svg class="mr-[8px] size-[18px] text-[#b0b8cc]"><use href="#chev-r"/></svg><span class="mr-2 mb-1 grid h-8 w-[35px] place-items-center rounded-lg border border-[#7d89ab] bg-[#606d92] text-[#c9925f]"><svg class="size-[30px]"><use href="#meshobj"/></svg></span>Cube
            <svg class="ml-[38px] size-[32px] text-[#4db391]"><use href="#mesh"/></svg>
            <svg class="mr-[11px] mb-1 ml-auto size-[26px] text-[#e6e6e6]"><use href="#eye"/></svg><svg class="mr-[2px] mb-1 size-6 text-[#e6e6e6]"><use href="#photocam"/></svg></li>
          <li class="flex h-9 items-center pt-1 pr-[22px] pl-[81px]"><svg class="mr-[9px] size-[18px] text-[#aaaaaa]"><use href="#chev-r"/></svg><svg class="mr-[10px] mb-1 size-[32px] text-[#b97f4c]"><use href="#bulb"/></svg>Light
            <svg class="mb-1 ml-[37px] size-[32px] text-[#4db391]"><use href="#lightdata"/></svg>
            <svg class="mr-[11px] mb-1 ml-auto size-[26px] text-[#e6e6e6]"><use href="#eye"/></svg><svg class="mr-[2px] mb-1 size-6 text-[#e6e6e6]"><use href="#photocam"/></svg></li>
          <li class="h-9 bg-[#2b2b2b]"></li><li class="h-9"></li><li class="h-9 bg-[#2b2b2b]"></li><li class="h-9"></li><li class="h-9 bg-[#2b2b2b]"></li><li class="h-9"></li><li class="h-9 bg-[#2b2b2b]"></li>
          <li class="absolute top-[81px] left-[52px] h-[90px] w-px bg-[#666666]"></li>
        </ul>
      </section>

      <!-- Properties -->
      <section class="flex min-h-0 flex-1 flex-col overflow-hidden rounded-xl bg-[#303030]">
        <div class="relative flex h-[45px] shrink-0 items-center justify-between pr-[13px] pb-[2px] pl-[13px]">
          <button class="flex h-9 w-[58px] items-center justify-center gap-1 rounded-md border-2 border-[#3d3d3d] bg-[#282828]" aria-label="Editor type"><svg class="size-8"><use href="#propsicon"/></svg><svg class="size-4"><use href="#down"/></svg></button>
          <label class="mr-8 flex h-9 w-[206px] items-center rounded-md border-2 border-[#3d3d3d] bg-[#1d1d1d] pl-1"><svg class="mr-2 size-8 shrink-0"><use href="#search"/></svg><input class="w-full placeholder:text-[#6c6c6c]" placeholder="Search" aria-label="Search properties"></label>
          <button class="grid h-9 w-9 place-items-center rounded-md border-2 border-[#3d3d3d] bg-[#282828]" aria-label="Options"><svg class="size-4"><use href="#down"/></svg></button>
        </div>
        <div class="flex min-h-0 flex-1">
          <nav class="flex w-[49px] shrink-0 flex-col bg-[#1d1d1d] pt-[14px] pl-[3px] text-[#b0b0b0]">
            <button class="grid h-[50px] place-items-center" aria-label="Tool"><svg class="size-8"><use href="#tools"/></svg></button>
            <hr class="my-[6px] border-t-2 border-[#191919]">
            <button class="grid h-[50px] place-items-center" aria-label="Render"><svg class="size-8"><use href="#rendercam"/></svg></button>
            <button class="grid h-[50px] place-items-center" aria-label="Output"><svg class="size-8"><use href="#printer"/></svg></button>
            <button class="grid h-[50px] place-items-center" aria-label="View layer"><svg class="size-8"><use href="#layers"/></svg></button>
            <button class="grid h-[50px] place-items-center" aria-label="Scene"><svg class="size-8"><use href="#scene"/></svg></button>
            <button class="grid h-[50px] place-items-center text-[#a8575c]" aria-label="World"><svg class="size-8"><use href="#world"/></svg></button>
            <hr class="my-[6px] border-t-2 border-[#191919]">
            <button class="grid h-[50px] place-items-center text-[#d0d0d0]" aria-label="Collection"><svg class="size-8"><use href="#boxline"/></svg></button>
            <hr class="my-[6px] border-t-2 border-[#191919]">
            <button class="my-[2px] grid h-[46px] place-items-center rounded-l-md bg-[#303030] text-[#d99760]" aria-label="Object"><svg class="size-8"><use href="#object"/></svg></button>
            <button class="grid h-[50px] place-items-center text-[#6486cb]" aria-label="Modifiers"><svg class="size-8"><use href="#wrench"/></svg></button>
            <button class="grid h-[50px] place-items-center text-[#6486cb]" aria-label="Particles"><svg class="size-8"><use href="#particles"/></svg></button>
            <button class="grid h-[50px] place-items-center text-[#6486cb]" aria-label="Physics"><svg class="size-8"><use href="#physics"/></svg></button>
            <button class="grid h-[50px] place-items-center text-[#6486cb]" aria-label="Constraints"><svg class="size-8"><use href="#constraint"/></svg></button>
            <button class="grid h-[50px] place-items-center text-[#45b08c]" aria-label="Data"><svg class="size-8"><use href="#mesh"/></svg></button>
            <button class="grid h-[50px] place-items-center text-[#a8575c]" aria-label="Material"><svg class="size-8"><use href="#material"/></svg></button>
            <hr class="my-[6px] border-t-2 border-[#191919]">
            <button class="grid h-[50px] place-items-center text-[#a8575c]" aria-label="Texture"><svg class="size-8"><use href="#texture"/></svg></button>
          </nav>
          <div class="flex min-w-0 flex-1 flex-col overflow-hidden pr-[3px] pl-[14px]">
            <div class="flex">
              <div class="min-w-0 flex-1">
                <div class="flex h-[77px] items-center pb-[14px]"><svg class="mr-3 ml-[2px] size-8"><use href="#object"/></svg>Cube<svg class="ml-auto size-8 text-[#a0a0a0]"><use href="#pin"/></svg></div>
                <div class="flex h-9 overflow-hidden rounded-md border-2 border-[#3d3d3d] bg-[#1d1d1d]">
                  <button class="flex w-[55px] items-center justify-center border-r-2 border-[#3d3d3d] bg-[#282828]" aria-label="Browse object"><svg class="size-8"><use href="#object"/></svg><svg class="size-4"><use href="#down"/></svg></button>
                  <input class="w-0 flex-1 pl-3" value="Cube" aria-label="Object name">
                </div>
                <div class="mt-[17px] h-[503px] rounded-lg bg-[#3d3d3d]">
                  <button class="flex h-12 w-full items-center pr-4 pl-3"><svg class="mr-[7px] size-5 text-[#b0b0b0]"><use href="#chev-d"/></svg>Transform<svg class="ml-auto h-2 w-4 text-[#999999]"><use href="#dots"/></svg></button>
                  <div id="transform" class="flex flex-col gap-3 pt-[14px]"></div>
                  <button class="mt-[22px] flex h-9 items-center pl-[39px]"><svg class="mr-[6px] size-[18px] text-[#b0b0b0]"><use href="#chev-r"/></svg>Delta Transform</button>
                </div>
                <div id="panels" class="mt-1 flex flex-col gap-[3px]"></div>
              </div>
              <div class="mt-[18px] ml-1 h-[880px] w-[6px] shrink-0 rounded-full bg-[#454545]"></div>
            </div>
          </div>
        </div>
      </section>
    </aside>
  </main>

  <!-- Status bar -->
  <footer class="flex h-9 shrink-0 items-center pt-1 pr-6 pl-[13px] text-[#8c8c8c]">
    <svg class="mr-[7px] h-[30px] w-[34px]" viewBox="0 0 34 30"><rect x="1" y="1" width="32" height="28" rx="5" fill="none" stroke="currentColor" stroke-width="2"/><path d="M8 14v7h18v-7" fill="none" stroke="currentColor" stroke-width="2.500"/></svg>Search
    <div class="ml-auto flex items-center gap-[9px]"><span>Collection</span><i class="h-6 w-px bg-[#777777]"></i><span>Cube</span><i class="h-6 w-px bg-[#777777]"></i><span>Verts:8</span><i class="h-6 w-px bg-[#777777]"></i><span>Faces:6</span><i class="h-6 w-px bg-[#777777]"></i><span>Tris:12</span><i class="h-6 w-px bg-[#777777]"></i><span>Objects:1/3</span><i class="h-6 w-px bg-[#777777]"></i><span>Duration: 00:10+10 (Frame 1/250)</span><i class="h-6 w-px bg-[#777777]"></i><span>Memory: 39.3 MiB</span><i class="h-6 w-px bg-[#777777]"></i><svg class="size-8"><use href="#globe"/></svg><i class="h-6 w-px bg-[#777777]"></i><span>4.2.0</span></div>
  </footer>
</div>
<div class="h-2 shrink-0"></div>
</div>

<!-- Edit menu -->
<div class="absolute top-[38px] left-[108px] flex w-[357px] flex-col rounded-b-md border border-[#2a2a2a] bg-[#181818] pt-[6px] pb-[7px]">
  <button class="flex h-9 items-center pr-6 pl-[55px] text-[#757575]"><span><u class="decoration-2 underline-offset-4">U</u>ndo</span><span class="ml-auto text-[#4c4c4c]">⌘ Z</span></button>
  <button class="flex h-9 items-center pr-6 pl-[55px] text-[#757575]"><span><u class="decoration-2 underline-offset-4">R</u>edo</span><span class="ml-auto text-[#4c4c4c]">⇧ ⌘ Z</span></button>
  <button class="flex h-9 items-center pr-[10px] pl-[55px]"><span>Undo <u class="decoration-2 underline-offset-4">H</u>istory</span><svg class="ml-auto h-3 w-[11px] text-[#999999]" viewBox="0 0 11 12"><path d="M0 0l11 6-11 6z" fill="currentColor"/></svg></button>
  <hr class="mx-[10px] my-[5px] border-t-2 border-[#2f2f2f]">
  <button class="flex h-9 items-center pr-6 pl-[55px] text-[#757575]"><span><u class="decoration-2 underline-offset-4">A</u>djust Last Operation…</span><span class="ml-auto text-[#4c4c4c]">F9</span></button>
  <button class="flex h-9 items-center pr-6 pl-[55px] text-[#757575]"><span>Repeat <u class="decoration-2 underline-offset-4">L</u>ast</span><span class="ml-auto text-[#4c4c4c]">⇧ R</span></button>
  <button class="flex h-9 items-center pr-6 pl-[55px] text-[#757575]"><span>R<u class="decoration-2 underline-offset-4">e</u>peat History…</span></button>
  <hr class="mx-[10px] my-[5px] border-t-2 border-[#2f2f2f]">
  <button class="flex h-9 items-center pr-6 pl-[15px]"><svg class="mr-2 size-8"><use href="#search"/></svg><span><u class="decoration-2 underline-offset-4">M</u>enu Search…</span><span class="ml-auto text-[#777777]">F3</span></button>
  <hr class="mx-[10px] my-[5px] border-t-2 border-[#2f2f2f]">
  <button class="flex h-9 items-center pr-6 pl-[55px]"><span>Rename Active <u class="decoration-2 underline-offset-4">I</u>tem…</span><span class="ml-auto text-[#777777]">F2</span></button>
  <button class="flex h-9 items-center pr-6 pl-[55px]"><span><u class="decoration-2 underline-offset-4">B</u>atch Rename…</span><span class="ml-auto text-[#777777]">⌘ F2</span></button>
  <hr class="mx-[10px] my-[5px] border-t-2 border-[#2f2f2f]">
  <label class="flex h-9 items-center pl-[22px]"><span class="relative mr-[15px] grid"><input type="checkbox" checked class="size-[18px] appearance-none rounded-sm bg-[#e6e6e6]"><svg class="pointer-events-none absolute inset-0 size-[18px]"><use href="#check"/></svg></span>Lock Object Modes</label>
  <hr class="mx-[10px] my-[5px] border-t-2 border-[#2f2f2f]">
  <button class="mx-1 my-[2px] flex h-8 items-center rounded-md bg-[#3d3d3d] pr-5 pl-[11px] text-white"><svg class="mr-2 size-8"><use href="#gear"/></svg><span><u class="decoration-2 underline-offset-4">P</u>references…</span><span class="ml-auto text-[#909090]">⌘ ,</span></button>
</div>
<div class="absolute top-[514px] left-[336px] flex h-[55px] w-[432px] items-center rounded-lg border border-[#2a2a2a] bg-[#1c1c1c] pt-[3px] pl-[21px] text-[#d8d8d8]" role="tooltip">Edit user preferences and system settings.</div>

<!-- Tutorial annotations -->
<div class="pointer-events-none absolute -top-[2px] left-[97px] h-[52px] w-[81px] border-[11px] border-[#ec4326]"></div>
<div class="pointer-events-none absolute top-[450px] left-[97px] h-[68px] w-[384px] rounded-[22px] border-[10px] border-[#ec4326]"></div>
<div class="absolute top-[53px] left-[117px] font-['Liberation_Sans',sans-serif] text-[50px] leading-[48px] font-bold text-[#ec5543] text-shadow-none">1.</div>
<div class="absolute top-[522px] left-[102px] font-['Liberation_Sans',sans-serif] text-[50px] leading-[48px] font-bold text-[#ec5543] text-shadow-none">2.</div>

<script>
// Projects world coordinates to the viewport drawing.
const C = .4029, S = .9152, SE = .4442, CE = .896, F = 1648.6, D = 17.986;
const cam = (x, y, z) => [C * x + S * y, -SE * S * x + SE * C * y + CE * z, D - (S * CE * x - C * CE * y + SE * z)];
const scr = ([r, u, d]) => (1187 + F * r / d).toFixed(1) + ' ' + (688 - F * u / d).toFixed(1);
const pt = (x, y, z = 0) => scr(cam(x, y, z));
function seg(a, b) {
  let p = cam(...a), q = cam(...b); const n = 2;
  if (p[2] < n && q[2] < n) return '';
  const cut = (s, t) => { const k = (n - s[2]) / (t[2] - s[2]); return s.map((v, i) => v + (t[i] - v) * k); };
  if (p[2] < n) p = cut(p, q); else if (q[2] < n) q = cut(q, p);
  return 'M' + scr(p) + 'L' + scr(q);
}
const set = (id, d) => document.getElementById(id).setAttribute('d', d);
let fine = '', coarse = '';
for (let i = -130; i <= 130; i++) if (i % 10) fine += seg([i, -130, 0], [i, 130, 0]) + seg([-130, i, 0], [130, i, 0]);
for (let i = -400; i <= 400; i += 10) if (i) coarse += seg([i, -400, 0], [i, 400, 0]) + seg([-400, i, 0], [400, i, 0]);
set('grid1', fine); set('grid10', coarse);
set('xaxis', seg([-300, 0, 0], [17, 0, 0])); set('yaxis', seg([0, -60, 0], [0, 300, 0]));
set('top', 'M' + [pt(-1,-1,1), pt(-1,1,1), pt(1,1,1), pt(1,-1,1)].join('L') + 'z');
set('left', 'M' + [pt(-1,-1,1), pt(1,-1,1), pt(1,-1,-1), pt(-1,-1,-1)].join('L') + 'z');
set('front', 'M' + [pt(1,-1,1), pt(1,1,1), pt(1,1,-1), pt(1,-1,-1)].join('L') + 'z');
set('outline', 'M' + [pt(-1,-1,1), pt(-1,1,1), pt(1,1,1), pt(1,1,-1), pt(1,-1,-1), pt(-1,-1,-1)].join('L') + 'z');
set('belowpath', 'M' + [pt(-1,-1), pt(1,-1), pt(1,1), pt(1,1,-1), pt(1,-1,-1), pt(-1,-1,-1)].join('L') + 'z');
let near = ''; for (let i = -4; i <= 5; i++) if (i) near += seg([i, -6, 0], [i, 6, 0]) + seg([-6, i, 0], [6, i, 0]);
set('gridcube', near);
set('xnear', seg([1, 0, 0], [12, 0, 0])); set('ynear', seg([0, -9, 0], [0, -1, 0]));

document.getElementById('ruler').innerHTML = Array.from({ length: 25 }, (_, i) =>
  `<div class="flex flex-col items-center pt-[10px]"><span class="h-8">${(i + 1) * 10}</span><div class="flex w-full flex-1 justify-center border-l border-[#222222] bg-[#2b2b2b]"><i class="h-full w-[2px] bg-[#161616]"></i></div></div>`).join('');

const row = (label, val, h, r) => `<label class="flex ${h} items-center"><span class="w-[148px] text-right">${label}</span><input class="ml-[18px] h-full w-[165px] ${r} bg-[#545454] text-center text-[20px]" value="${val}"><svg class="ml-1 size-[30px] text-[#a0a0a0]"><use href="#lock"/></svg><i class="ml-[18px] size-2 rounded-full bg-[#dcdcdc]"></i></label>`;
const group = (name, val) => `<div class="flex flex-col gap-[2px]">${row(name + ' X', val, 'h-8', 'rounded-tl-md')}${row('Y', val, 'h-[34px]', 'rounded-none')}${row('Z', val, 'h-[34px]', 'rounded-bl-md')}</div>`;
document.getElementById('transform').innerHTML = group('Location', '0 m') + group('Rotation', '0°') +
  `<label class="flex h-8 items-center"><span class="w-[148px] text-right">Mode</span><span class="relative ml-[18px] flex h-8 w-[165px]"><select class="w-full appearance-none rounded-md bg-[#282828] pl-3"><option>XYZ Euler</option></select><svg class="pointer-events-none absolute top-2 right-[2px] size-4"><use href="#down"/></svg></span><i class="ml-[52px] size-2 rounded-full bg-[#dcdcdc]"></i></label>` + group('Scale', '1.000');
document.getElementById('panels').innerHTML = ['Relations', 'Collections', 'Instancing', 'Motion Paths', 'Visibility', 'Viewport Display', 'Line Art'].map(n =>
  `<button class="flex h-[45px] items-center rounded-lg bg-[#3d3d3d] pr-4 pl-[15px]"><svg class="mr-[6px] size-[18px] text-[#b0b0b0]"><use href="#chev-r"/></svg>${n}<svg class="ml-auto h-2 w-4 text-[#999999]"><use href="#dots"/></svg></button>`).join('');
</script>
</body>
</html>
